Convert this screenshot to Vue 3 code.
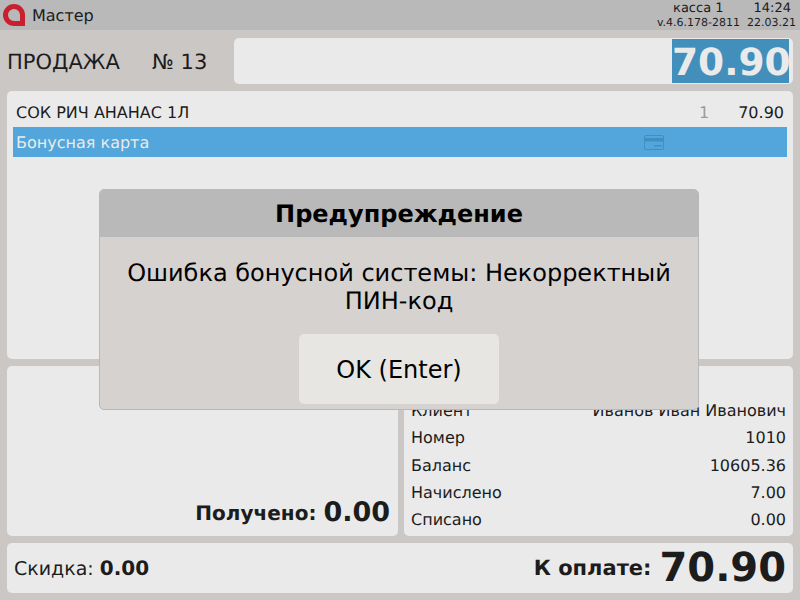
<script setup>
const card = [
  { label: 'Клиент', value: 'Иванов Иван Иванович' },
  { label: 'Номер', value: '1010' },
  { label: 'Баланс', value: '10605.36' },
  { label: 'Начислено', value: '7.00' },
  { label: 'Списано', value: '0.00' }
];
</script>

<template>
  <div class="page">
    <header class="topbar">
      <svg class="logo" width="22" height="22" viewBox="0 0 22 22">
        <path d="M11 0a11 11 0 1 0 0 22h11V11A11 11 0 0 0 11 0zM11 5a6 6 0 0 1 6 6v6h-6a6 6 0 0 1 0-12z" fill="#c8202f" fill-rule="evenodd" />
      </svg>
      <span class="user">Мастер</span>
      <div class="info">
        <div class="info-row top"><span class="kassa">касса 1</span><span class="clock">14:24</span></div>
        <div class="info-row small"><span class="ver">v.4.6.178-2811</span><span>22.03.21</span></div>
      </div>
    </header>

    <section class="sale">
      <div class="sale-title">ПРОДАЖА</div>
      <div class="sale-num">№ 13</div>
      <div class="sale-box"><span class="sale-total">70.90</span></div>
    </section>

    <section class="panel receipt">
      <div class="line">
        <span class="line-name">СОК РИЧ АНАНАС 1Л</span>
        <span class="line-qty">1</span>
        <span class="line-sum">70.90</span>
      </div>
      <div class="line selected">
        <span class="line-name">Бонусная карта</span>
        <svg class="card-icon" width="20" height="15" viewBox="0 0 20 15">
          <rect x="0.5" y="0.5" width="19" height="14" rx="1.5" fill="none" stroke="#3f8fc0" />
          <rect x="1" y="3" width="18" height="3.5" fill="#3f8fc0" />
          <rect x="10" y="10" width="8" height="1.5" fill="#3f8fc0" />
        </svg>
      </div>
    </section>

    <section class="mid">
      <div class="panel received">
        <span class="received-label">Получено:</span>
        <span class="received-value">0.00</span>
      </div>
      <div class="panel bonus">
        <div v-for="row in card" :key="row.label" class="bonus-row">
          <span>{{ row.label }}</span>
          <span>{{ row.value }}</span>
        </div>
      </div>
    </section>

    <footer class="panel totals">
      <div class="discount">Скидка: <b>0.00</b></div>
      <div class="pay">
        <span class="pay-label">К оплате:</span>
        <span class="pay-value">70.90</span>
      </div>
    </footer>

    <div class="dialog">
      <div class="dialog-head">Предупреждение</div>
      <div class="dialog-body">
        <div class="dialog-text">Ошибка бонусной системы: Некорректный ПИН-код</div>
        <button class="dialog-btn">OK (Enter)</button>
      </div>
    </div>
  </div>
</template>

<style>
html, body {
  margin: 0;
  background: #cbc7c4;
}
</style>

<style scoped>
.page {
  position: relative;
  width: 800px;
  height: 600px;
  overflow: hidden;
  background: #cbc7c4;
  color: #1c1c1c;
  font-family: "DejaVu Sans", sans-serif;
  text-rendering: geometricPrecision;
}
.topbar {
  display: flex;
  align-items: center;
  height: 30px;
  padding: 0 4px 0 3px;
  box-sizing: border-box;
  background: #b9b9b9;
}
.logo {
  flex: none;
}
.user {
  margin-left: 7px;
  font-size: 16px;
}
.info {
  margin-left: auto;
  font-size: 11px;
  line-height: 15px;
}
.info-row {
  display: flex;
  justify-content: flex-end;
}
.info-row.top {
  font-size: 13px;
  line-height: 15px;
  padding-right: 5px;
}
.kassa {
  margin-right: 30px;
}
.info-row.small {
  margin-top: -1px;
}
.ver {
  margin-right: 7px;
}
.sale {
  display: flex;
  align-items: center;
  height: 46px;
  margin: 8px 7px 7px;
}
.sale-title {
  width: 145px;
  padding-top: 2px;
  font-size: 21px;
}
.sale-num {
  width: 82px;
  padding-top: 2px;
  font-size: 21px;
}
.sale-box {
  flex: 1;
  display: flex;
  justify-content: flex-end;
  height: 46px;
  padding: 1px 4px 1px 0;
  box-sizing: border-box;
  background: #eaeaea;
  border-radius: 5px;
}
.sale-total {
  width: 117px;
  background: #438fbc;
  color: #eaeaea;
  font-size: 37.5px;
  font-weight: 700;
  line-height: 46px;
  text-align: center;
}
.panel {
  background: #eaeaea;
  border-radius: 5px;
}
.receipt {
  height: 268px;
  margin: 0 7px 7px;
  padding: 6px 6px 0;
  box-sizing: border-box;
}
.line {
  display: flex;
  align-items: center;
  height: 30px;
  padding: 0 3px;
  font-size: 16px;
}
.line-name {
  flex: 1;
}
.line-qty {
  color: #9a9a9a;
  margin-right: 29px;
}
.selected {
  background: #52a6db;
  color: #eaeaea;
}
.card-icon {
  margin-right: 120px;
}
.mid {
  display: flex;
  gap: 6px;
  height: 170px;
  margin: 0 7px 7px;
}
.received {
  display: flex;
  flex: none;
  align-items: flex-end;
  justify-content: flex-end;
  width: 391px;
  height: 170px;
  padding: 0 8px 6px 0;
  box-sizing: border-box;
}
.received-label {
  font-size: 20px;
  font-weight: 700;
  line-height: 34px;
}
.received-value {
  margin-left: 7px;
  font-size: 27px;
  font-weight: 700;
  line-height: 34px;
}
.bonus {
  flex: 1;
  display: flex;
  flex-direction: column;
  justify-content: flex-end;
  padding: 0 7px 3px;
}
.bonus-row {
  display: flex;
  justify-content: space-between;
  align-items: center;
  height: 27.2px;
  font-size: 16px;
}
.totals {
  display: flex;
  align-items: center;
  justify-content: space-between;
  height: 50px;
  margin: 0 7px;
  padding: 0 7px;
}
.discount {
  font-size: 19px;
}
.discount b {
  font-size: 20px;
}
.pay {
  display: flex;
  align-items: center;
}
.pay-label {
  font-size: 21px;
  font-weight: 700;
  line-height: 1;
  padding-top: 1px;
}
.pay-value {
  margin-left: 8px;
  font-size: 40px;
  font-weight: 700;
  line-height: 1;
}
.dialog {
  position: absolute;
  left: 99px;
  top: 189px;
  width: 600px;
  height: 221px;
  box-sizing: border-box;
  border: 1px solid #b8b8b8;
  border-radius: 5px;
  overflow: hidden;
  background: #d6d2cf;
  color: #000;
}
.dialog-head {
  height: 47px;
  background: #b9b9b9;
  font-size: 24px;
  font-weight: 700;
  line-height: 49px;
  text-align: center;
}
.dialog-body {
  display: flex;
  flex-direction: column;
  align-items: center;
}
.dialog-text {
  width: 560px;
  margin-top: 22px;
  font-size: 24px;
  line-height: 28px;
  text-align: center;
}
.dialog-btn {
  width: 200px;
  height: 70px;
  margin-top: 19px;
  padding-top: 3px;
  border: 0;
  border-radius: 5px;
  background: #e7e6e3;
  color: #000;
  font-family: inherit;
  font-size: 24px;
}
</style>
